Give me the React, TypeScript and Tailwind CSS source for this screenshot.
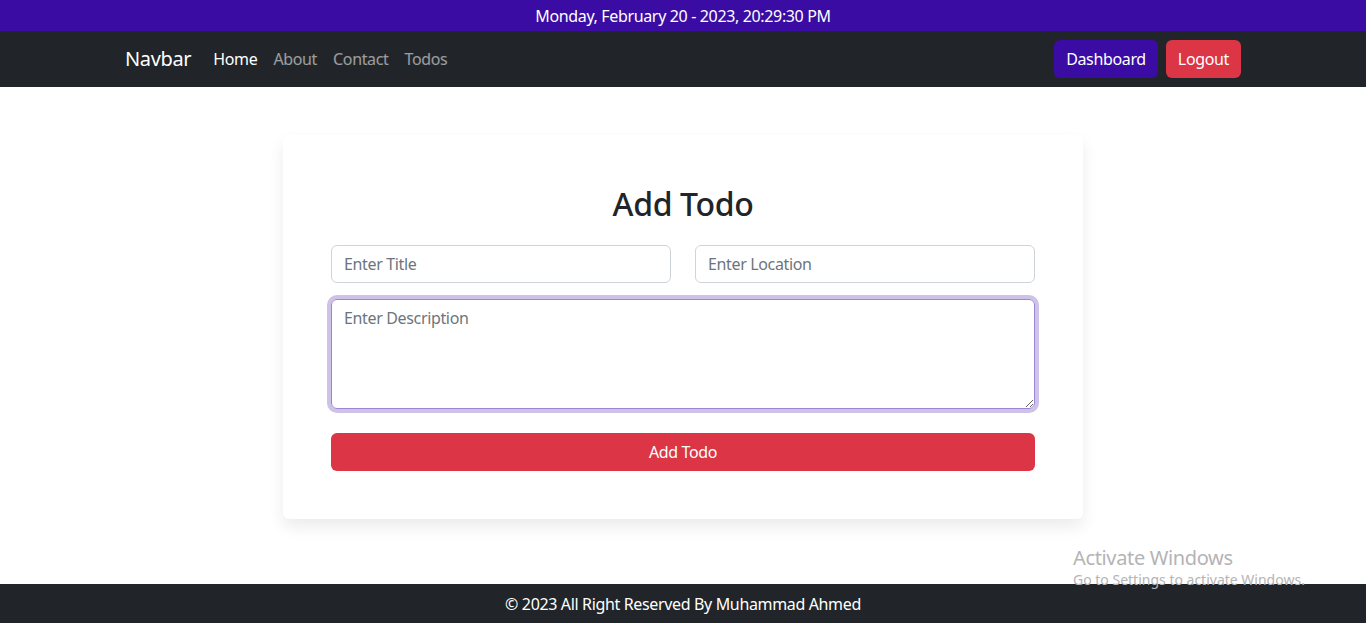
import React from "react"

const font = { fontFamily: '"Noto Sans", "Open Sans", sans-serif' }

const App = () => {
  return (
    <div className="relative min-h-[623px] bg-white text-[#212529] tracking-[-0.35px]" style={font}>
      <div className="h-[31px] bg-[#3a0ca3] text-white text-[16px] flex items-center justify-center">
        Monday, February 20 - 2023, 20:29:30 PM
      </div>

      <nav className="h-[56px] bg-[#212529]">
        <div className="w-[1140px] mx-auto px-3 h-full flex items-center">
          <a className="text-white text-[20px] mr-[14px]">Navbar</a>
          <ul className="flex items-center text-[16px]">
            <li className="px-2 text-white">Home</li>
            <li className="px-2 text-white/55">About</li>
            <li className="px-2 text-white/55">Contact</li>
            <li className="px-2 text-white/55">Todos</li>
          </ul>
          <div className="ml-auto flex gap-2">
            <button className="h-[38px] px-3 rounded-md bg-[#3a0ca3] text-white text-[16px]">Dashboard</button>
            <button className="h-[38px] px-3 rounded-md bg-[#dc3545] text-white text-[16px]">Logout</button>
          </div>
        </div>
      </nav>

      <main className="h-[497px] pt-[48px]">
        <div className="w-[800px] mx-auto bg-white rounded-md shadow-[0_0.5rem_1rem_rgba(0,0,0,0.08)] p-12">
          <h2 className="text-center text-[32px] font-medium leading-[1.3] mb-5">Add Todo</h2>
          <form>
            <div className="grid grid-cols-2 gap-6 mb-4">
              <input
                placeholder="Enter Title"
                className="h-[38px] border border-[#ced4da] rounded-md px-3 text-[16px] placeholder:text-[#6c757d] outline-none"
              />
              <input
                placeholder="Enter Location"
                className="h-[38px] border border-[#ced4da] rounded-md px-3 text-[16px] placeholder:text-[#6c757d] outline-none"
              />
            </div>
            <textarea
              placeholder="Enter Description"
              rows={4}
              className="block w-full h-[110px] border border-[#9d86d1] rounded-md px-3 py-[6px] text-[16px] placeholder:text-[#6c757d] outline-none shadow-[0_0_0_4px_rgba(58,12,163,0.25)] mb-6"
            />
            <button type="button" className="w-full h-[38px] rounded-md bg-[#dc3545] text-white text-[16px]">
              Add Todo
            </button>
          </form>
        </div>
      </main>

      <footer className="h-[39px] bg-[#212529] text-white text-[16px] flex items-center justify-center">
        © 2023 All Right Reserved By Muhammad Ahmed
      </footer>

      <div className="absolute left-[1073px] top-[545px] text-[#b4b4b4] pointer-events-none">
        <div className="text-[20px] leading-[26px]">Activate Windows</div>
        <div className="text-[14px] leading-[18px] tracking-normal">Go to Settings to activate Windows.</div>
      </div>
    </div>
  )
}

export default App
